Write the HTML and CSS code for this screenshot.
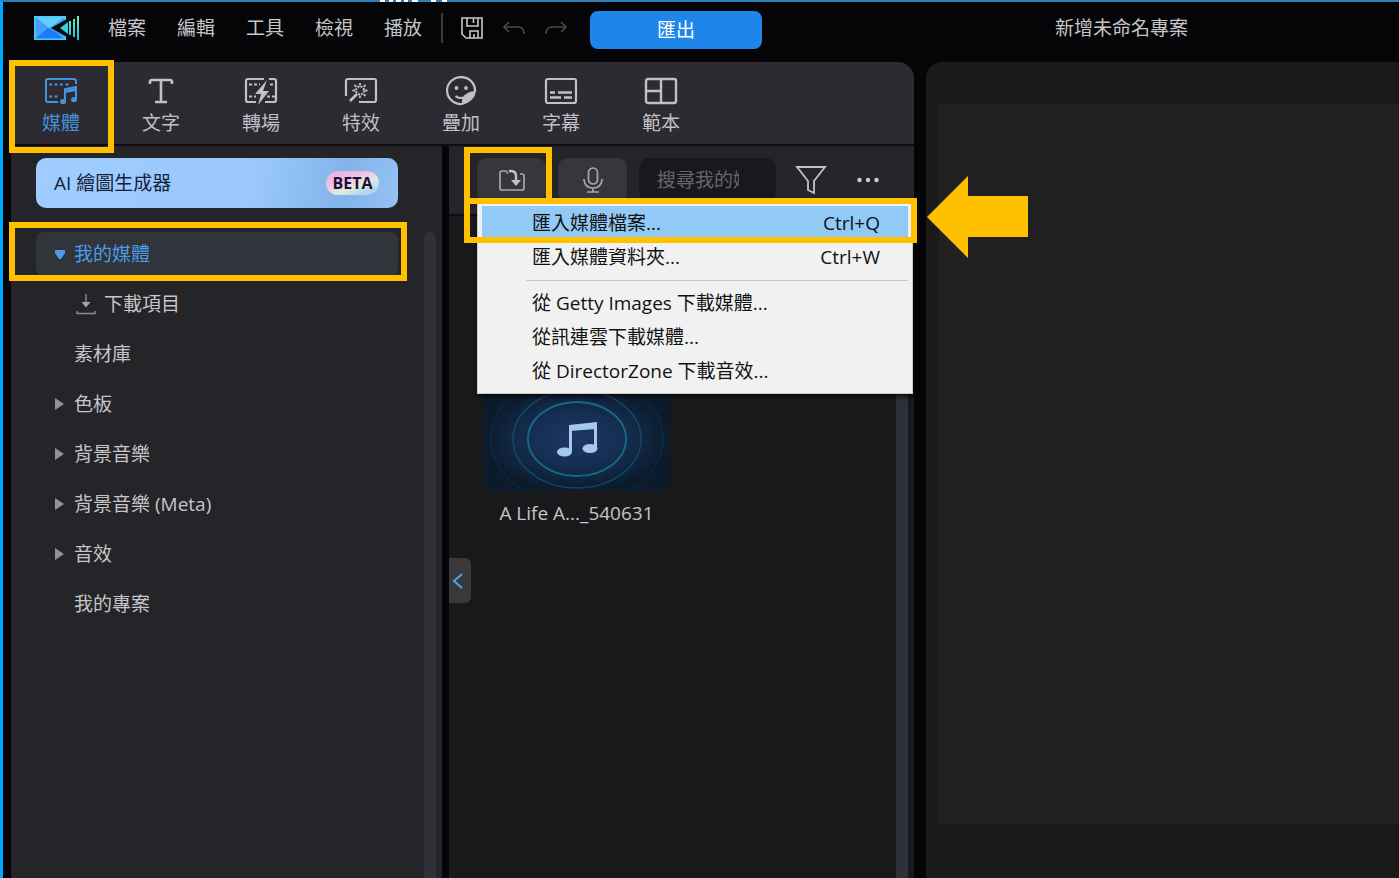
FILE: index.html
```html
<!DOCTYPE html>
<html lang="zh-Hant">
<head>
<meta charset="utf-8">
<meta name="viewport" content="width=device-width, initial-scale=1">
<title>新增未命名專案</title>
<link rel="stylesheet" href="styles.css">
</head>
<body>
<div class="app">
  <svg class="edge-marks" width="72" height="2" viewBox="0 0 72 2" aria-hidden="true"><path d="M1 1h5M10 1h4M17 1h5M25 1h4M33 1h6M52 1h5M63 1h5" stroke="#fff" stroke-width="2"/></svg>

  <header class="topbar">
    <svg class="logo" width="46" height="26" viewBox="0 0 46 26" aria-label="logo">
      <defs>
        <linearGradient id="lg" x1="0" y1="0" x2="0" y2="1"><stop offset="0" stop-color="#6ff0b8"/><stop offset="1" stop-color="#22b8e8"/></linearGradient>
      </defs>
      <path d="M0 1h32v24H0z" fill="#3aa8f8"/>
      <path d="M0 1l15 12L0 25z" fill="#4a9df8"/>
      <path d="M0 25l14-12 8 4 8 8z" fill="#1f7af5"/>
      <path d="M0 1h32L15 13z" fill="#64cdfa"/>
      <path d="M.8 1.800h30.500v22.500H.8z" fill="none" stroke="#45cdf8" stroke-width="1.600"/>
      <path d="M17 13L33 4v18z" fill="#04060c"/>
      <path d="M26 13l8-6v12z" fill="#35cfe2"/>
      <path d="M35 6h2v14h-2zM39 4h2v18h-2zM43 1h2v24h-2z" fill="url(#lg)"/>
    </svg>
    <nav class="menubar">
      <button>檔案</button><button>編輯</button><button>工具</button><button>檢視</button><button>播放</button>
    </nav>
    <div class="quick">
      <button class="icon-btn" aria-label="儲存"><svg width="24" height="24" viewBox="0 0 24 24" fill="none" stroke="#c9c9cb" stroke-width="1.600"><path d="M2 2h20v20H6l-4-4zM7 2v8h11V2M13.500 2v5M10 22v-7h8v7M14 18v4"/></svg></button>
      <button class="icon-btn" aria-label="復原"><svg width="24" height="24" viewBox="0 0 24 24" fill="none" stroke="#4a4a4c" stroke-width="1.600"><path d="M7 6l-5 5 5 5M2 11h14q6 0 6 7"/></svg></button>
      <button class="icon-btn" aria-label="重做"><svg width="24" height="24" viewBox="0 0 24 24" fill="none" stroke="#4a4a4c" stroke-width="1.600"><path d="M17 6l5 5-5 5M22 11H8q-6 0-6 7"/></svg></button>
    </div>
    <button class="export">匯出</button>
    <h1 class="project">新增未命名專案</h1>
  </header>

  <main class="workspace">
    <section class="library">
      <nav class="tabs">
        <button class="tab active">
          <svg width="34" height="30" viewBox="0 0 34 30" fill="none" stroke="currentColor" stroke-width="2"><path d="M14 26H4q-2 0-2-2V5q0-2 2-2h26q2 0 2 2v3"/><path d="M5 8.500h22M5 20.500h10" stroke-dasharray="3 2.500"/><path d="M21 25V13l11-2v12"/><path d="M21 15.500l11-2" stroke-width="3"/><ellipse cx="19" cy="25.500" rx="3" ry="2.600" fill="currentColor" stroke="none"/><ellipse cx="30" cy="23.500" rx="3" ry="2.600" fill="currentColor" stroke="none"/></svg>
          媒體</button>
        <button class="tab">
          <svg width="34" height="30" viewBox="0 0 34 30" fill="none" stroke="currentColor" stroke-width="2.600"><path d="M6 8V6q0-2 2-2h18q2 0 2 2v2M17 4v22M11 26h12"/></svg>
          文字</button>
        <button class="tab">
          <svg width="34" height="30" viewBox="0 0 34 30" fill="none" stroke="currentColor" stroke-width="2.200"><path d="M20 3H4Q2 3 2 5v19q0 2 2 2h8M25 3h5q2 0 2 2v19q0 2-2 2h-9"/><path d="M5 8.500h11M26 8.500h5M5 20.500h7M23 20.500h8" stroke-dasharray="3 2"/><path d="M23 4L11 18h6l-3 11 11-14h-6z" fill="currentColor" stroke="none"/></svg>
          轉場</button>
        <button class="tab">
          <svg width="34" height="30" viewBox="0 0 34 30" fill="none" stroke="currentColor" stroke-width="2.200"><path d="M2 20V5q0-2 2-2h26q2 0 2 2v19q0 2-2 2H15"/><path d="M6 25l7-7" stroke-width="2.600"/><circle cx="16" cy="14.500" r="4" stroke-dasharray="2 1.140" stroke-width="2"/><path d="M16 7v2.500M16 19.500V22M8.500 14.500H11M21 14.500h2.500M10.500 9l1.800 1.800M19.700 18.200l1.800 1.800M21.500 9l-1.800 1.800" stroke-width="1.800"/></svg>
          特效</button>
        <button class="tab">
          <svg width="34" height="30" viewBox="0 0 34 30" fill="none" stroke="currentColor" stroke-width="2.200"><path d="M31 16A14 13.500 0 1 0 18 28"/><path d="M18 29q-1-8 4-11 4-3 10-3-1 10-14 14z" fill="currentColor" stroke="none"/><path d="M11.500 20q3 3 8 1.500"/><circle cx="12.500" cy="12" r="1.900" fill="currentColor" stroke="none"/><circle cx="22" cy="12" r="1.900" fill="currentColor" stroke="none"/></svg>
          疊加</button>
        <button class="tab">
          <svg width="34" height="30" viewBox="0 0 34 30" fill="none" stroke="currentColor" stroke-width="2.200"><rect x="2" y="3" width="30" height="24" rx="2"/><path d="M6 16.500h5M14 16.500h14M6 21.500h11M20 21.500h8" stroke-width="2.600"/></svg>
          字幕</button>
        <button class="tab">
          <svg width="34" height="30" viewBox="0 0 34 30" fill="none" stroke="currentColor" stroke-width="2.400"><rect x="2" y="3" width="30" height="24" rx="2"/><path d="M17 3v24M2 15h15"/></svg>
          範本</button>
      </nav>

      <div class="columns">
        <aside class="sidebar">
          <button class="ai">AI 繪圖生成器<span class="beta">BETA</span></button>
          <div class="tree-wrap">
            <ul class="tree">
              <li><button class="node selected"><svg class="caret" width="12" height="12" viewBox="0 0 12 12"><path d="M1 2h10v3l-4 6H5L1 5z" fill="currentColor"/></svg>我的媒體</button></li>
              <li><button class="node child"><svg width="20" height="22" viewBox="0 0 20 22" fill="none" stroke="#8d8d90" stroke-width="1.400"><path d="M10 1v12M1 18v2.500h18V18"/><path d="M5.500 9h9L10 14.500z" fill="#a5a5a8" stroke="none"/></svg>下載項目</button></li>
              <li><button class="node"><span class="caret"></span>素材庫</button></li>
              <li><button class="node"><svg class="caret" width="12" height="12" viewBox="0 0 12 12"><path d="M1 0l9 6-9 6z" fill="#929295"/></svg>色板</button></li>
              <li><button class="node"><svg class="caret" width="12" height="12" viewBox="0 0 12 12"><path d="M1 0l9 6-9 6z" fill="#929295"/></svg>背景音樂</button></li>
              <li><button class="node"><svg class="caret" width="12" height="12" viewBox="0 0 12 12"><path d="M1 0l9 6-9 6z" fill="#929295"/></svg>背景音樂 (Meta)</button></li>
              <li><button class="node"><svg class="caret" width="12" height="12" viewBox="0 0 12 12"><path d="M1 0l9 6-9 6z" fill="#929295"/></svg>音效</button></li>
              <li><button class="node"><span class="caret"></span>我的專案</button></li>
            </ul>
            <div class="scroll"></div>
          </div>
        </aside>

        <section class="content">
          <div class="toolbar">
            <button class="tool" aria-label="匯入"><svg width="28" height="26" viewBox="0 0 28 26" fill="none" stroke="#a9a9ac" stroke-width="1.700"><path d="M10 6.500L8 4H4Q2 4 2 6v15q0 2 2 2h20q2 0 2-2V9q0-2-2-2h-2"/><path d="M11 4h2q5 0 5 5v7" stroke-width="2.400" stroke="#c2c2c5"/><path d="M13 13h10l-5 6z" fill="#c2c2c5" stroke="none"/></svg></button>
            <button class="tool" aria-label="錄音"><svg width="22" height="26" viewBox="0 0 22 26" fill="none" stroke="#a9a9ac" stroke-width="1.700"><rect x="6.500" y="1" width="9" height="16" rx="4.500"/><path d="M2 12v1q1 8 9 8t9-8v-1M11 21v3.500M5 25h12"/></svg></button>
            <input class="search" type="text" aria-label="搜尋" placeholder="搜尋我的媒體">
            <button class="icon-btn filter" aria-label="篩選"><svg width="32" height="30" viewBox="0 0 32 30" fill="none" stroke="#c4c4c6" stroke-width="1.800"><path d="M2 2h28L19 16v12l-6-3v-9z"/></svg></button>
            <button class="icon-btn" aria-label="更多"><svg width="24" height="8" viewBox="0 0 24 8" fill="#cfcfd1"><circle cx="3.500" cy="4" r="2.200"/><circle cx="12" cy="4" r="2.200"/><circle cx="20.500" cy="4" r="2.200"/></svg></button>
          </div>
          <div class="media">
            <figure class="clip">
              <svg class="thumb" viewBox="0 0 187 105" aria-hidden="true">
                <defs><radialGradient id="tg"><stop offset="0" stop-color="#213663"/><stop offset="0.550" stop-color="#142d4f"/><stop offset="1" stop-color="#0b1b2c"/></radialGradient></defs>
                <rect width="187" height="105" fill="url(#tg)"/>
                <g fill="none" stroke="#176b86"><ellipse cx="94" cy="53" rx="49" ry="37" stroke-width="1.800"/><ellipse cx="94" cy="53" rx="64" ry="49" stroke-opacity=".5" stroke-width="1.500"/><ellipse cx="94" cy="53" rx="86" ry="66" stroke-opacity=".25"/></g>
                <path d="M86 39l28-3v7l-28 2z" fill="#a4c8ef"/>
                <path d="M87.500 40v26M112.500 37v26" stroke="#a4c8ef" stroke-width="3"/>
                <ellipse cx="81.500" cy="66" rx="7.500" ry="4.500" fill="#a4c8ef"/><ellipse cx="107" cy="62.500" rx="7.500" ry="4.500" fill="#a4c8ef"/>
              </svg>
              <figcaption>A Life A..._540631</figcaption>
            </figure>
            <div class="scroll"></div>
          </div>
          <button class="collapse" aria-label="收合"><svg width="12" height="16" viewBox="0 0 12 16" fill="none" stroke="#4da3e6" stroke-width="2"><path d="M10 1L2 8l8 7"/></svg></button>
          <div class="popup" role="menu">
            <button class="item hot" role="menuitem">匯入媒體檔案...<kbd>Ctrl+Q</kbd></button>
            <button class="item" role="menuitem">匯入媒體資料夾...<kbd>Ctrl+W</kbd></button>
            <hr>
            <button class="item" role="menuitem">從 Getty Images 下載媒體...</button>
            <button class="item" role="menuitem">從訊連雲下載媒體...</button>
            <button class="item" role="menuitem">從 DirectorZone 下載音效...</button>
          </div>
        </section>
      </div>
    </section>

    <section class="preview"><div class="canvas"></div></section>
  </main>

  <div class="mark mark-tab"></div>
  <div class="mark mark-node"></div>
  <div class="mark mark-import"></div>
  <div class="mark mark-item"></div>
  <svg class="arrow" width="102" height="82" viewBox="0 0 102 82" aria-hidden="true"><path d="M0 41L41 0v20h60v41H41v21z" fill="#ffc000"/></svg>
</div>
</body>
</html>
```

FILE: styles.css
```css
* { box-sizing: border-box; }

body {
  margin: 0;
  background: #050507;
  color: #c6c6c8;
  font: 19px/24px "Open Sans", "Noto Sans CJK TC", sans-serif;
}

button, input {
  margin: 0;
  padding: 0;
  border: 0;
  background: none;
  color: inherit;
  font: inherit;
}

svg { display: block; flex: none; }

.app {
  position: relative;
  display: flex;
  flex-direction: column;
  min-height: 100vh;
  border-top: 2px solid #2f7fb5;
  border-left: 3px solid #00a8ff;
}

.edge-marks { position: absolute; left: 376px; top: -2px; }

/* Top bar */
.topbar {
  display: flex;
  align-items: center;
  height: 60px;
  padding: 0 0 8px 31px;
}

.menubar { display: flex; gap: 31px; margin: 0 19px 0 28px; }
.menubar button { white-space: nowrap; }

.quick {
  display: flex;
  align-items: center;
  gap: 18px;
  height: 30px;
  padding-left: 17px;
  border-left: 2px solid #3b3b3e;
}

.icon-btn { display: flex; }

.export {
  width: 172px;
  height: 38px;
  margin: 3px 0 0 22px;
  border-radius: 8px;
  background: #1e86ea;
  color: #fff;
}

.project {
  flex: 1;
  margin: 0;
  padding-left: 82px;
  font-size: 19px;
  font-weight: 400;
  text-align: center;
}

/* Work area */
.workspace {
  flex: 1;
  display: flex;
  gap: 12px;
  padding-left: 8px;
}

.library {
  display: flex;
  flex-direction: column;
  flex: 0 0 903px;
  border-radius: 0 16px 0 0;
  background: #2c2b31;
}

.tabs {
  display: flex;
  height: 84px;
  border-bottom: 2px solid #0d0d10;
}

.tab {
  display: flex;
  flex-direction: column;
  align-items: center;
  gap: 5px;
  width: 100px;
  padding-top: 14px;
  color: #c0c0c6;
}

.tab.active { color: #4593dc; }

.columns {
  flex: 1;
  display: flex;
  gap: 7px;
  background: #050507;
}

/* Sidebar */
.sidebar {
  display: flex;
  flex-direction: column;
  gap: 24px;
  width: 431px;
  padding: 12px 6px 0 25px;
  background: #252429;
}

.ai {
  display: flex;
  align-items: center;
  justify-content: space-between;
  width: 362px;
  height: 50px;
  padding: 0 19px 0 18px;
  border-radius: 10px;
  background: linear-gradient(100deg, #a0ccff 0%, #9ac8fc 60%, #82b3ea 85%, #94c2f5 100%);
  color: #14213a;
}

.beta {
  width: 53px;
  border-radius: 13px;
  background: linear-gradient(160deg, #dcb0ee 0%, #eebfe2 35%, #e3eadf 60%, #b3dde8 80%, #c6bdf0 100%);
  color: #1a1033;
  font-size: 16px;
  font-weight: 700;
}

.tree-wrap { flex: 1; display: flex; justify-content: space-between; }

.tree {
  display: flex;
  flex-direction: column;
  gap: 6px;
  width: 362px;
  margin: 0;
  padding: 0;
  list-style: none;
}

.node {
  display: flex;
  align-items: center;
  gap: 8px;
  width: 100%;
  height: 44px;
  padding-left: 18px;
  border-radius: 8px;
}

.node.selected { background: #31343b; color: #4c9de6; }
.node.child { padding-left: 40px; }
.caret { width: 12px; }

.scroll { width: 12px; border-radius: 6px 6px 0 0; background: #2e3139; }

/* Media content */
.content {
  position: relative;
  flex: 1;
  display: flex;
  flex-direction: column;
  background: #19191b;
}

.toolbar {
  display: flex;
  align-items: center;
  height: 70px;
  padding: 0 34px 0 28px;
  border-bottom: 2px solid #0d0d10;
  background: #252429;
}

.tool {
  display: flex;
  align-items: center;
  justify-content: center;
  width: 69px;
  height: 44px;
  margin-right: 12px;
  border-radius: 10px;
  background: #37363b;
}

.search {
  width: 137px;
  height: 44px;
  padding: 0 37px 0 18px;
  border-radius: 10px;
  background: #19191d;
}

.search::placeholder { color: #66666a; opacity: 1; }

.filter { margin: 0 29px 0 19px; }

.media {
  flex: 1;
  display: flex;
  justify-content: space-between;
  padding: 0 6px 0 34px;
}

.clip { width: 187px; margin: 0; padding-top: 170px; text-align: center; }
.thumb { width: 100%; border-radius: 8px; }
.clip figcaption { margin-top: 10px; white-space: nowrap; }

.collapse {
  position: absolute;
  left: 0;
  top: 412px;
  display: flex;
  align-items: center;
  width: 22px;
  height: 45px;
  padding-left: 3px;
  border-radius: 0 6px 6px 0;
  background: #39393b;
}

.popup {
  position: absolute;
  left: 28px;
  top: 56px;
  width: 436px;
  padding: 3px 4px 5px;
  border: 1px solid #c9c9c9;
  background: #f1f1f1;
  box-shadow: 3px 3px 4px rgba(0, 0, 0, 0.6);
}

.item {
  display: flex;
  align-items: center;
  justify-content: space-between;
  width: 100%;
  height: 34px;
  padding: 0 28px 0 50px;
  color: #111;
  white-space: nowrap;
}

.item.hot { background: #91c9f7; }
.item kbd { font: inherit; }

.popup hr {
  margin: 6px 0 5px 44px;
  border: 0;
  border-top: 1px solid #c8c8c8;
}

/* Preview */
.preview {
  flex: 1;
  display: flex;
  padding: 42px 0 54px 13px;
  border-radius: 16px 0 0 0;
  background: #1a1a1a;
}

.canvas { flex: 1; background: #202020; }

/* Callouts */
.mark { position: absolute; border: 6px solid #ffc000; }
.mark-tab { left: 6px; top: 58px; width: 105px; height: 93px; }
.mark-node { left: 6px; top: 220px; width: 398px; height: 59px; }
.mark-import { left: 461px; top: 145px; width: 88px; height: 57px; }
.mark-item { left: 461px; top: 196px; width: 453px; height: 45px; }
.arrow { position: absolute; left: 924px; top: 174px; }
```
